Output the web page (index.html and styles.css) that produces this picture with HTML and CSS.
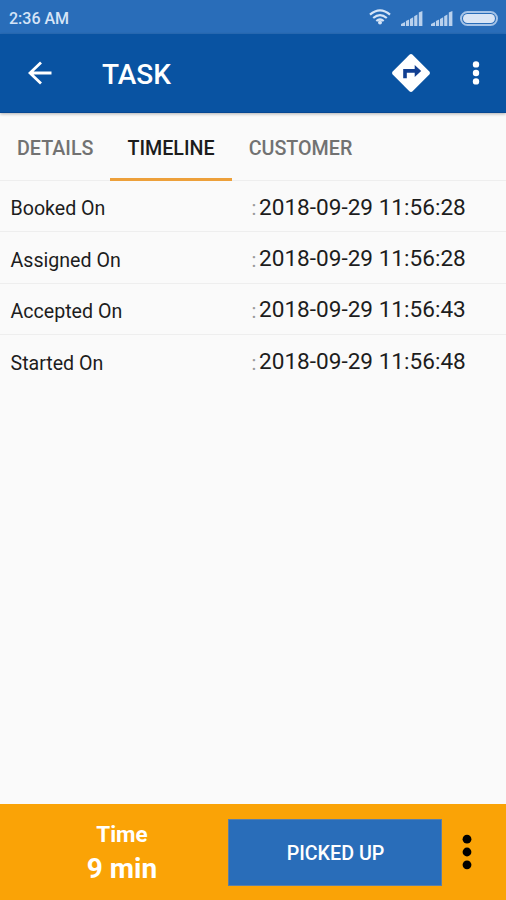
FILE: index.html
```html
<!DOCTYPE html>
<html lang="en">
<head>
  <meta charset="UTF-8">
  <meta name="viewport" content="width=device-width, initial-scale=1.0">
  <title>Task</title>
  <link rel="stylesheet" href="styles.css">
</head>
<body>
  <div class="main">
    <div class="status">
      <span class="clock">2:36 AM</span>
      <svg class="wifi" width="22" height="16" viewBox="0 0 22 16">
        <path d="M1 5.6Q11 -3 21 5.6M4.2 9Q11 3.2 17.8 9M7.3 12Q11 9 14.7 12" />
        <circle cx="11" cy="13.6" r="2" />
      </svg>
      <svg class="signal" width="22" height="15" viewBox="0 0 22 15">
        <path d="M0 15v-2l4-2v4zM4.9 15v-5l3.2-1.5V15zM9 15V8l3.2-1.8V15zM13.2 15V5.2l3.2-1.8V15zM17.8 15V1.5L21.4 0v15z" />
      </svg>
      <svg class="signal" width="22" height="15" viewBox="0 0 22 15">
        <path d="M0 15v-2l4-2v4zM4.9 15v-5l3.2-1.5V15zM9 15V8l3.2-1.8V15zM13.2 15V5.2l3.2-1.8V15zM17.8 15V1.5L21.4 0v15z" />
      </svg>
      <div class="battery"></div>
    </div>
    <div class="header">
      <svg class="back" width="24" height="24" viewBox="0 0 24 24">
        <path d="M23.5 12H2M13 1.5L2 12l11 10.5" />
      </svg>
      <h1 class="title">TASK</h1>
      <svg class="route" width="40" height="40" viewBox="0 0 40 40">
        <path class="sign" d="M18.4 1.7Q20 .2 21.6 1.7L38.3 18.4Q39.8 20 38.3 21.6L21.6 38.3Q20 39.8 18.4 38.3L1.7 21.6Q.2 20 1.7 18.4z" />
        <path class="turn" d="M12.2 25.3v-9.2h11.5v-4l6.5 6-6.5 6v-4.3h-7.9v5.5z" />
      </svg>
      <svg class="dots" width="8" height="24" viewBox="0 0 8 24">
        <circle cx="4" cy="3.4" r="3.2" />
        <circle cx="4" cy="12" r="3.2" />
        <circle cx="4" cy="20.4" r="3.2" />
      </svg>
    </div>
    <div class="tabs">
      <div class="tab">DETAILS</div>
      <div class="tab active">TIMELINE</div>
      <div class="tab">CUSTOMER</div>
    </div>
    <div class="list">
      <div class="row">
        <span class="label">Booked On</span>
        <span class="colon">:</span>
        <span class="value">2018-09-29 11:56:28</span>
      </div>
      <div class="row">
        <span class="label">Assigned On</span>
        <span class="colon">:</span>
        <span class="value">2018-09-29 11:56:28</span>
      </div>
      <div class="row">
        <span class="label">Accepted On</span>
        <span class="colon">:</span>
        <span class="value">2018-09-29 11:56:43</span>
      </div>
      <div class="row">
        <span class="label">Started On</span>
        <span class="colon">:</span>
        <span class="value">2018-09-29 11:56:48</span>
      </div>
    </div>
    <div class="footer">
      <div class="time">
        <div class="time-label">Time</div>
        <div class="time-value">9 min</div>
      </div>
      <button class="btn">PICKED UP</button>
      <svg class="more" width="10" height="36" viewBox="0 0 10 36">
        <circle cx="5" cy="5.2" r="4.4" />
        <circle cx="5" cy="18" r="4.4" />
        <circle cx="5" cy="30.8" r="4.4" />
      </svg>
    </div>
  </div>
</body>
</html>
```
FILE: styles.css
```css
*{
  box-sizing: border-box;
}
body{
  margin:0px;
  font-family: Roboto, "Liberation Sans", sans-serif;
  background-color: #fafafa;
}
.main{
  width:506px;
  height:900px;
  display:flex;
  flex-direction: column;
  overflow: hidden;
}
/* status bar */
.status{
  height:34px;
  flex-shrink: 0;
  display:flex;
  align-items:center;
  padding:2px 8px 0 9px;
  background-color: #296db9;
  color:#d5e4f7;
}
.clock{
  flex:1;
  font-size:16px;
  font-weight:500;
}
.wifi{
  fill:#d5e4f7;
  margin:0 10px 2px 0;
}
.wifi path{
  fill:none;
  stroke:#d5e4f7;
  stroke-width:2.2;
}
.signal{
  fill:#b9d1ed;
  margin:0 8px 0 0;
}
.signal + .battery{
  margin-left:-1px;
}
.battery{
  width:38px;
  height:15px;
  border:2px solid #a5c3e7;
  border-radius:8px;
  padding:1px;
  background-color: #d9e5f5;
  background-clip: content-box;
}
/* toolbar */
.header{
  height:79px;
  flex-shrink: 0;
  display:flex;
  align-items:center;
  padding:0 26px 0 28px;
  background-color: #0953a2;
  border-bottom:1px solid #064792;
  box-shadow:0 1px 3px rgba(0,0,0,0.3);
  position: relative;
}
.back{
  fill:none;
  stroke:#fff;
  stroke-width:2.8;
}
.title{
  flex:1;
  margin:3px 0 0 50px;
  font-size:28px;
  font-weight:500;
  color:#fff;
}
.sign{
  fill:#fff;
}
.turn{
  fill:#123f91;
}
.dots{
  fill:#fff;
  margin-left:41px;
}
/* tabs */
.tabs{
  height:68px;
  flex-shrink: 0;
  display:flex;
  border-bottom:1px solid #eee;
}
.tab{
  height:68px;
  padding:0 17px;
  line-height:71px;
  font-size:19.7px;
  font-weight:500;
  color:#727272;
}
.active{
  color:#1c1c1c;
  border-bottom:3px solid #eda03a;
}
/* timeline */
.list{
  flex:1;
}
.row{
  height:51.4px;
  display:flex;
  align-items:center;
  padding:2px 10px 0 10.5px;
  border-bottom:1px solid #eee;
  color:#1d1d1d;
}
.row:last-child{
  border-bottom:none;
}
.label{
  width:241px;
  padding-top:3px;
  font-size:19.6px;
}
.colon{
  width:7.5px;
  padding-top:2px;
  font-size:20px;
  color:#999;
}
.value{
  font-size:22.6px;
}
/* bottom bar */
.footer{
  height:96px;
  flex-shrink: 0;
  display:flex;
  align-items:center;
  background-color: #faa306;
}
.time{
  width:228px;
  padding:0 0 2px 16px;
  text-align:center;
  color:#fff;
  font-weight:700;
}
.time-label{
  font-size:22.5px;
  line-height:34px;
}
.time-value{
  font-size:28px;
  line-height:35px;
}
.btn{
  width:214px;
  height:67px;
  padding:2px 0 0 1px;
  border:1px solid #5c7fa5;
  background-color: #296db9;
  color:#fff;
  font-family: inherit;
  font-size:19.7px;
  font-weight:500;
}
.more{
  margin-left:20px;
}
```
